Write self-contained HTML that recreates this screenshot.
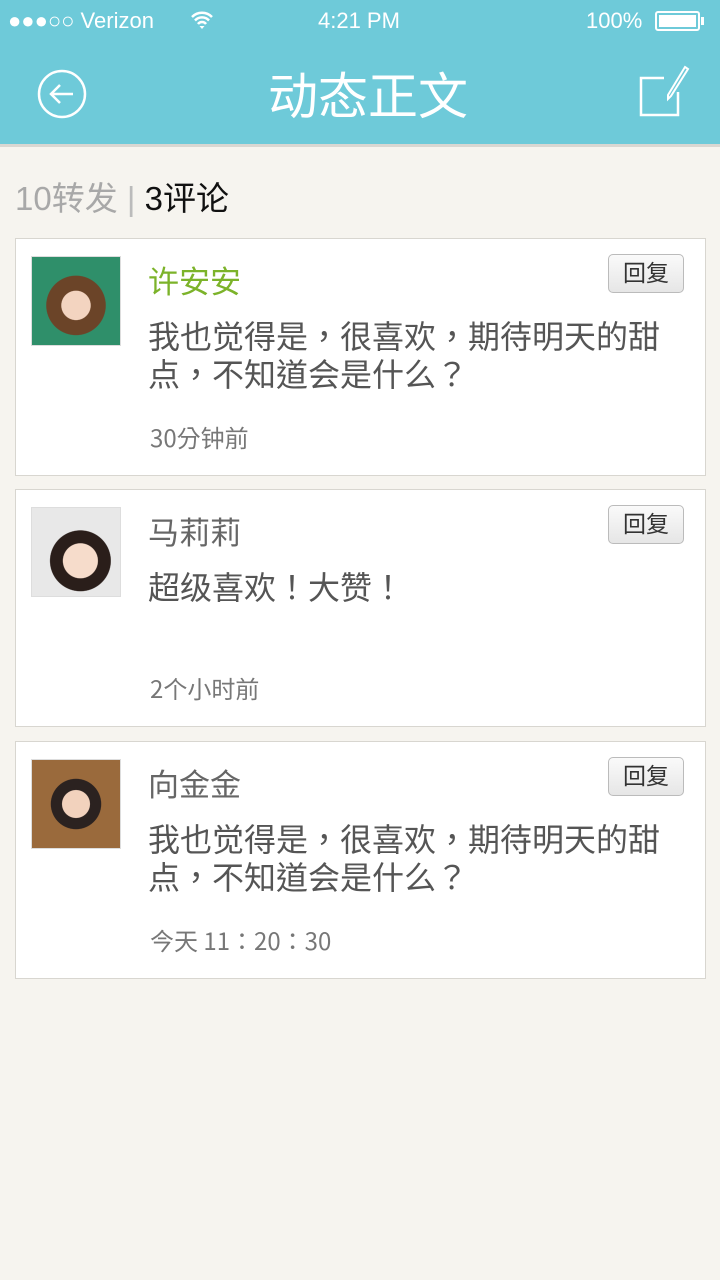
<!DOCTYPE html>
<html><head><meta charset="utf-8"><style>
*{margin:0;padding:0;box-sizing:border-box}
body{width:720px;height:1280px;background:#f6f4ef;font-family:"Liberation Sans","Noto Sans CJK SC",sans-serif;position:relative;overflow:hidden}
.top{position:absolute;left:0;top:0;width:720px;height:144px;background:#6ecad9;color:#fff}
.sb{position:absolute;top:8px;font-size:22px}
.title{position:absolute;left:16px;right:0;top:62px;text-align:center;font-size:50px;line-height:62px;font-family:"Noto Sans CJK SC",sans-serif}
.tabs{position:absolute;left:15px;top:176px;font-size:33px;color:#a8a8a8;font-family:"Liberation Sans","Noto Sans CJK SC",sans-serif;line-height:46px;white-space:pre}
.card{position:absolute;left:15px;width:691px;height:238px;background:#fff;border:1px solid #d8d6d0}
.av{position:absolute;left:15px;top:17px;width:90px;height:90px;border:1px solid #ddd}
.name{position:absolute;left:132px;top:18px;font-size:31px;color:#666}
.txt{position:absolute;left:132px;top:77px;width:530px;font-size:32px;line-height:38px;color:#555;font-family:"Noto Sans CJK TC",sans-serif}
.time{position:absolute;left:134px;top:180px;font-size:24px;color:#777;font-family:"Noto Sans CJK TC",sans-serif}
.btn{position:absolute;left:592px;top:15px;width:76px;height:39px;border:1px solid #bbb;border-radius:5px;background:linear-gradient(#fafafa,#e6e6e6);font-size:23px;color:#333;text-align:center;line-height:37px}
</style></head><body>
<div class="top">
 <div class="sb" style="left:8px">●●●○○ Verizon</div>
 <svg style="position:absolute;left:190px;top:10px" width="24" height="20" viewBox="0 0 24 20"><path d="M2 7a14 14 0 0 1 20 0M5 10.5a9.5 9.5 0 0 1 14 0M8 14a5 5 0 0 1 8 0" stroke="#fff" stroke-width="2.5" fill="none"/><path d="M12 19l-2.5-3h5z" fill="#fff"/></svg>
 <div class="sb" style="left:318px">4:21 PM</div>
 <div class="sb" style="left:586px">100%</div>
 <div style="position:absolute;left:655px;top:11px;width:45px;height:20px;border:2px solid #fff;border-radius:3px;padding:2px"><div style="background:#fff;width:100%;height:100%"></div></div>
 <div style="position:absolute;left:701px;top:17px;width:3px;height:8px;background:#fff"></div>
 <svg style="position:absolute;left:37px;top:69px" width="50" height="50" viewBox="0 0 50 50"><circle cx="25" cy="25" r="23" stroke="#fff" stroke-width="2.5" fill="none"/><path d="M36 25H14M23 16l-9 9 9 9" stroke="#fff" stroke-width="2.5" fill="none"/></svg>
 <div class="title">动态正文</div>
 <svg style="position:absolute;left:638px;top:64px" width="56" height="54" viewBox="0 0 56 54"><path d="M26 14H3v37h37V28" stroke="#fff" stroke-width="2.5" fill="none"/><path d="M47 3l3 2-17 27-3 3 0-4z" stroke="#fff" stroke-width="2" fill="none"/></svg>
</div>
<div style="position:absolute;left:0;top:144px;width:720px;height:3px;background:#d9d7d2"></div>
<div class="tabs">10转发 <span style="color:#bbb">|</span> <span style="color:#111">3评论</span></div>

<div class="card" style="top:238px">
 <div class="av" style="background:radial-gradient(circle at 50% 55%,#f3d4c0 0 22%,#6b4428 23% 45%,#2f8f6a 46%)"></div>
 <div class="name" style="color:#7cb32a">许安安</div>
 <div class="btn">回复</div>
 <div class="txt">我也觉得是，很喜欢，期待明天的甜点，不知道会是什么？</div>
 <div class="time">30分钟前</div>
</div>
<div class="card" style="top:489px">
 <div class="av" style="background:radial-gradient(circle at 55% 60%,#f6dccb 0 24%,#2a1e1a 25% 42%,#e8e8e8 43%)"></div>
 <div class="name">马莉莉</div>
 <div class="btn">回复</div>
 <div class="txt">超级喜欢！大赞！</div>
 <div class="time">2个小时前</div>
</div>
<div class="card" style="top:741px">
 <div class="av" style="background:radial-gradient(circle at 50% 50%,#f2d2bd 0 22%,#2b2220 23% 40%,#9a6a3c 41%)"></div>
 <div class="name">向金金</div>
 <div class="btn">回复</div>
 <div class="txt">我也觉得是，很喜欢，期待明天的甜点，不知道会是什么？</div>
 <div class="time">今天 11：20：30</div>
</div>
</body></html>
